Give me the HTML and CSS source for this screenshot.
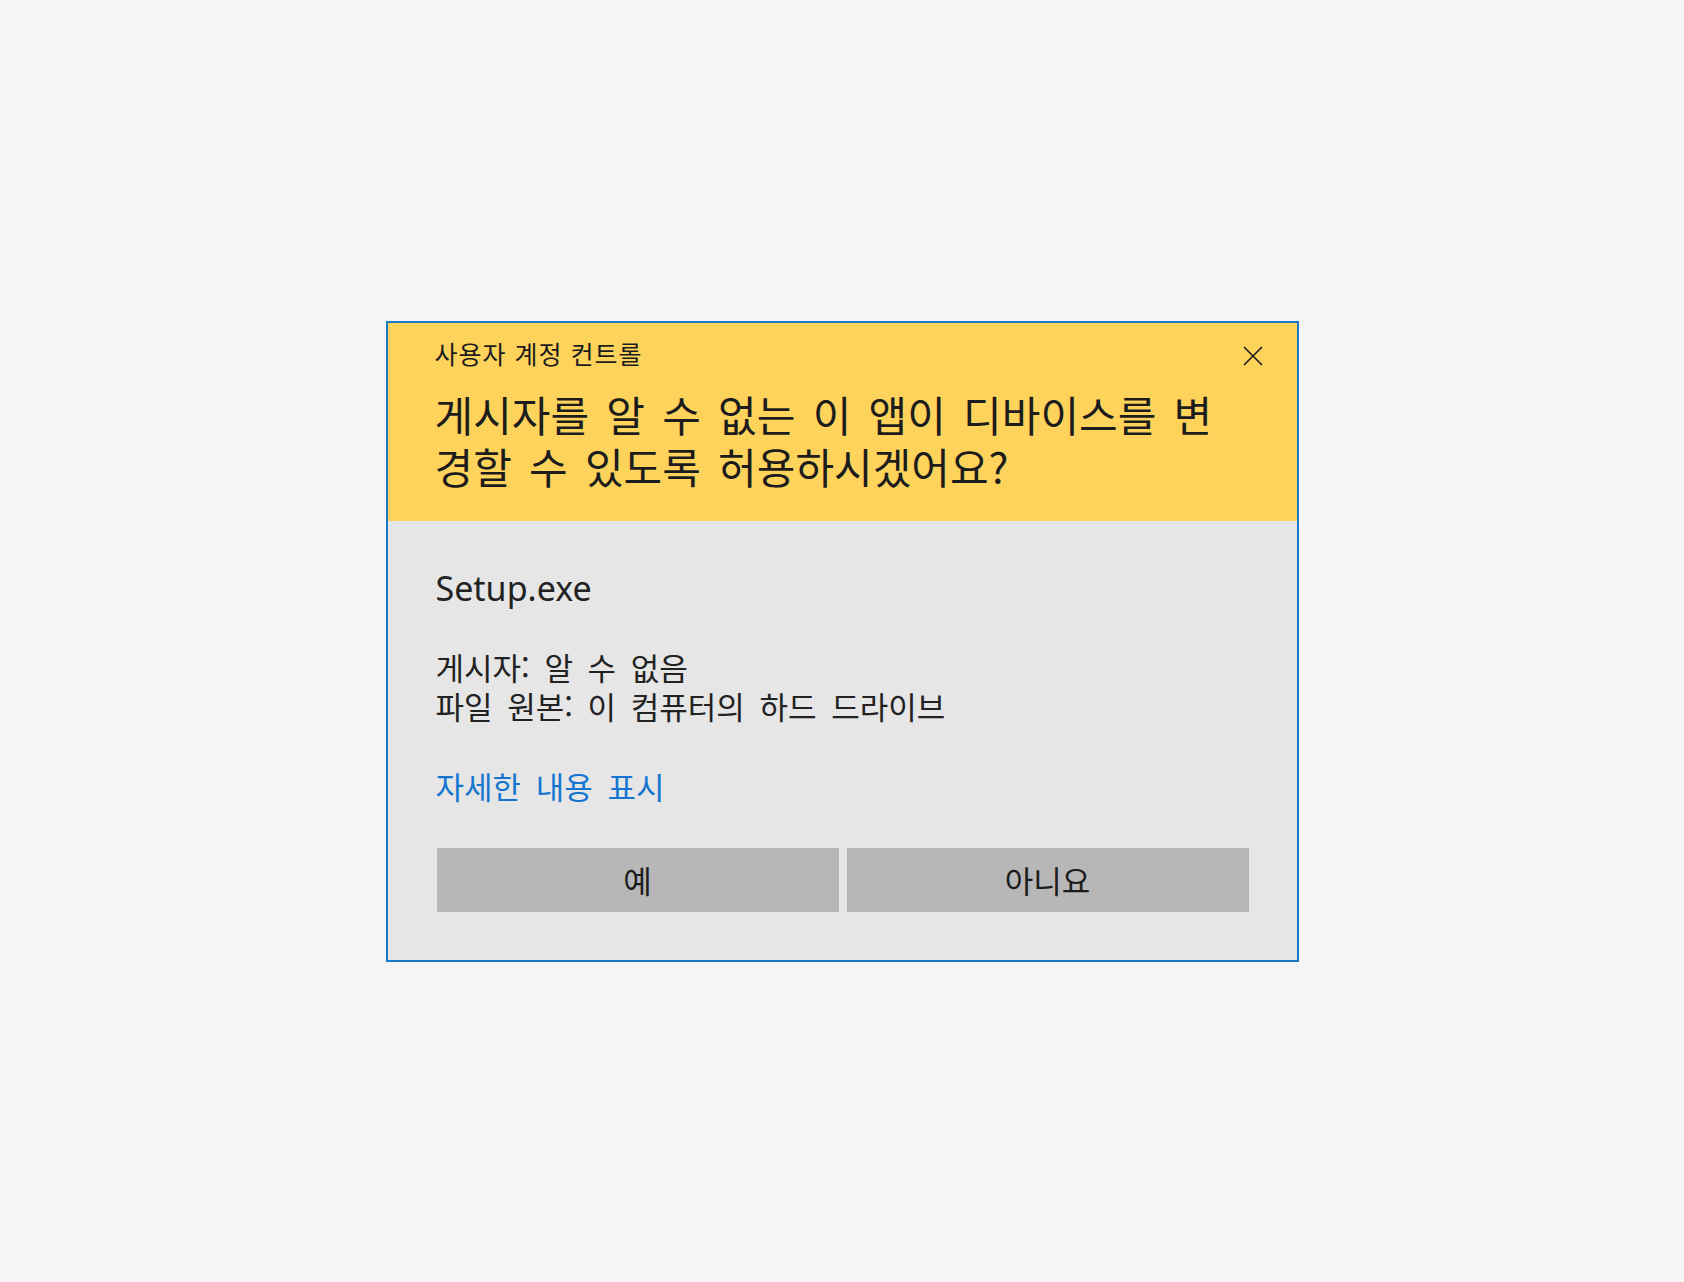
FILE: index.html
```html
<!DOCTYPE html>
<html lang="ko">
<head>
<meta charset="utf-8">
<title>사용자 계정 컨트롤</title>
<link rel="stylesheet" href="styles.css">
</head>
<body>
<div class="page">
  <div class="dialog">
    <div class="header">
      <div class="caption">사용자 계정 컨트롤</div>
      <button class="close" aria-label="닫기">
        <svg width="20" height="20" viewBox="0 0 20 20"><path d="M1 1 L19 19 M19 1 L1 19" stroke="#1a1a1a" stroke-width="1.6" fill="none"/></svg>
      </button>
      <div class="question">게시자를 알 수 없는 이 앱이 디바이스를 변경할 수 있도록 허용하시겠어요?</div>
    </div>
    <div class="body">
      <div class="app">Setup.exe</div>
      <div class="info">
        <div>게시자: 알 수 없음</div>
        <div>파일 원본: 이 컴퓨터의 하드 드라이브</div>
      </div>
      <a class="details" href="#">자세한 내용 표시</a>
      <div class="buttons">
        <button class="btn">예</button>
        <button class="btn">아니요</button>
      </div>
    </div>
  </div>
</div>
</body>
</html>
```

FILE: styles.css
```css
html, body {
  margin: 0;
  padding: 0;
  background: #f5f5f5;
}
.page {
  min-height: 100vh;
  display: flex;
  align-items: center;
  justify-content: center;
  font-family: "Noto Sans CJK KR", "Noto Sans", sans-serif;
}
.dialog {
  width: 909px;
  border: 2px solid #1979c9;
  display: flex;
  flex-direction: column;
}
.header {
  position: relative;
  background: #fed35c;
  padding: 16px 62px 29px 48px;
  color: #1c1c1c;
}
.caption {
  font-size: 25px;
  line-height: 28px;
  letter-spacing: 1px;
  margin-left: -1px;
}
.close {
  position: absolute;
  top: 23px;
  right: 34px;
  width: 20px;
  height: 20px;
  padding: 0;
  border: 0;
  background: none;
  display: flex;
}
.question {
  margin-top: 21px;
  font-size: 42px;
  line-height: 52px;
  word-spacing: 5.5px;
  margin-left: -1px;
}
.body {
  background: #e6e6e6;
  padding: 45px 48px 48px 48px;
  color: #222222;
  display: flex;
  flex-direction: column;
}
.app {
  font-family: "Noto Sans", sans-serif;
  font-size: 34px;
  line-height: 44px;
}
.info {
  margin-top: 37px;
  font-size: 31px;
  line-height: 39px;
  word-spacing: 6px;
}
.details {
  margin-top: 41px;
  align-self: flex-start;
  font-size: 31px;
  line-height: 39px;
  color: #1676cf;
  text-decoration: none;
  word-spacing: 6px;
}
.buttons {
  margin-top: 43px;
  display: flex;
  gap: 8px;
  padding: 0 0 0 1px;
}
.btn {
  flex: 1;
  height: 64px;
  border: 0;
  background: #b7b7b7;
  color: #1c1c1c;
  font-family: "Noto Sans CJK KR", sans-serif;
  font-size: 31px;
  padding: 0;
}
```
